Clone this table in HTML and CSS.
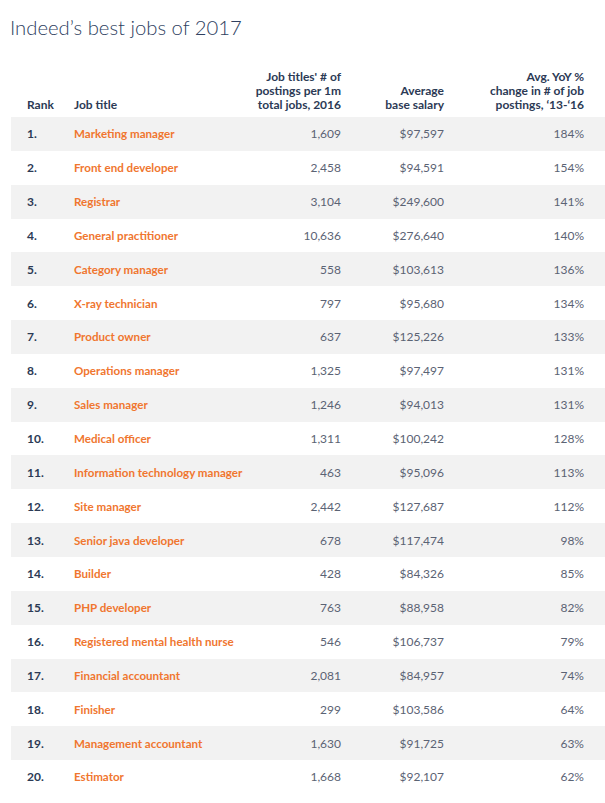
FILE: index.html
```html
<!DOCTYPE html>
<html>
<head>
<meta charset="utf-8">
<link rel="stylesheet" href="styles.css">
</head>
<body>
<h1 class="title">Indeed’s best jobs of 2017</h1>
<div class="table">
  <div class="row head">
    <div class="c-rank">Rank</div>
    <div class="c-job">Job title</div>
    <div class="c-num">Job titles' # of<br>postings per 1m<br>total jobs, 2016</div>
    <div class="c-sal">Average<br>base salary</div>
    <div class="c-pct">Avg. YoY %<br>change in # of job<br>postings, ‘13-‘16</div>
  </div>
  <div class="row"><div class="c-rank">1.</div><div class="c-job">Marketing manager</div><div class="c-num">1,609</div><div class="c-sal">$97,597</div><div class="c-pct">184%</div></div>
  <div class="row"><div class="c-rank">2.</div><div class="c-job">Front end developer</div><div class="c-num">2,458</div><div class="c-sal">$94,591</div><div class="c-pct">154%</div></div>
  <div class="row"><div class="c-rank">3.</div><div class="c-job">Registrar</div><div class="c-num">3,104</div><div class="c-sal">$249,600</div><div class="c-pct">141%</div></div>
  <div class="row"><div class="c-rank">4.</div><div class="c-job">General practitioner</div><div class="c-num">10,636</div><div class="c-sal">$276,640</div><div class="c-pct">140%</div></div>
  <div class="row"><div class="c-rank">5.</div><div class="c-job">Category manager</div><div class="c-num">558</div><div class="c-sal">$103,613</div><div class="c-pct">136%</div></div>
  <div class="row"><div class="c-rank">6.</div><div class="c-job">X-ray technician</div><div class="c-num">797</div><div class="c-sal">$95,680</div><div class="c-pct">134%</div></div>
  <div class="row"><div class="c-rank">7.</div><div class="c-job">Product owner</div><div class="c-num">637</div><div class="c-sal">$125,226</div><div class="c-pct">133%</div></div>
  <div class="row"><div class="c-rank">8.</div><div class="c-job">Operations manager</div><div class="c-num">1,325</div><div class="c-sal">$97,497</div><div class="c-pct">131%</div></div>
  <div class="row"><div class="c-rank">9.</div><div class="c-job">Sales manager</div><div class="c-num">1,246</div><div class="c-sal">$94,013</div><div class="c-pct">131%</div></div>
  <div class="row"><div class="c-rank">10.</div><div class="c-job">Medical officer</div><div class="c-num">1,311</div><div class="c-sal">$100,242</div><div class="c-pct">128%</div></div>
  <div class="row"><div class="c-rank">11.</div><div class="c-job">Information technology manager</div><div class="c-num">463</div><div class="c-sal">$95,096</div><div class="c-pct">113%</div></div>
  <div class="row"><div class="c-rank">12.</div><div class="c-job">Site manager</div><div class="c-num">2,442</div><div class="c-sal">$127,687</div><div class="c-pct">112%</div></div>
  <div class="row"><div class="c-rank">13.</div><div class="c-job">Senior java developer</div><div class="c-num">678</div><div class="c-sal">$117,474</div><div class="c-pct">98%</div></div>
  <div class="row"><div class="c-rank">14.</div><div class="c-job">Builder</div><div class="c-num">428</div><div class="c-sal">$84,326</div><div class="c-pct">85%</div></div>
  <div class="row"><div class="c-rank">15.</div><div class="c-job">PHP developer</div><div class="c-num">763</div><div class="c-sal">$88,958</div><div class="c-pct">82%</div></div>
  <div class="row"><div class="c-rank">16.</div><div class="c-job">Registered mental health nurse</div><div class="c-num">546</div><div class="c-sal">$106,737</div><div class="c-pct">79%</div></div>
  <div class="row"><div class="c-rank">17.</div><div class="c-job">Financial accountant</div><div class="c-num">2,081</div><div class="c-sal">$84,957</div><div class="c-pct">74%</div></div>
  <div class="row"><div class="c-rank">18.</div><div class="c-job">Finisher</div><div class="c-num">299</div><div class="c-sal">$103,586</div><div class="c-pct">64%</div></div>
  <div class="row"><div class="c-rank">19.</div><div class="c-job">Management accountant</div><div class="c-num">1,630</div><div class="c-sal">$91,725</div><div class="c-pct">63%</div></div>
  <div class="row"><div class="c-rank">20.</div><div class="c-job">Estimator</div><div class="c-num">1,668</div><div class="c-sal">$92,107</div><div class="c-pct">62%</div></div>
</div>
</body>
</html>
```

FILE: styles.css
```css
html, body {
  margin: 0;
  padding: 0;
  background: #ffffff;
}
body {
  font-family: Lato, "Open Sans", sans-serif;
  color: #2c3a55;
}
.title {
  margin: 0;
  padding: 12px 0 0 10px;
  font-size: 20.3px;
  line-height: 30px;
  font-weight: 300;
  color: #2f3f5f;
}
.table {
  margin: 28px 0 0 11px;
  width: 594px;
}
.row {
  display: grid;
  grid-template-columns: 47px 1fr 90px 103px 140px;
  align-items: center;
  padding: 0 21px 0 16px;
  height: 33.85px;
  font-size: 12px;
}
.row:nth-child(even) {
  background: #f2f2f2;
}
.row.head {
  height: auto;
  align-items: end;
  padding-bottom: 5px;
  line-height: 14px;
  font-weight: 700;
  color: #2c3a55;
  background: none;
}
.c-rank {
  font-weight: 700;
  color: #2c3a55;
}
.c-job {
  font-weight: 700;
  font-size: 11.6px;
  color: #f0762f;
}
.head .c-job {
  font-size: 12px;
  color: #2c3a55;
}
.c-num, .c-sal, .c-pct {
  text-align: right;
  color: #5b6374;
}
.head .c-num, .head .c-sal, .head .c-pct {
  color: #2c3a55;
}
```
